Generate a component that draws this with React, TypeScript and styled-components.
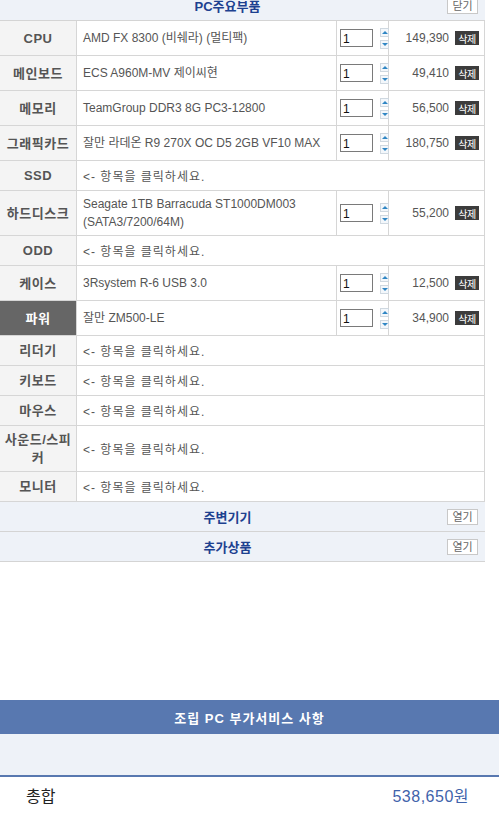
import * as React from "react";
import styled, { createGlobalStyle } from "styled-components";

type Part = {
  label: string;
  name?: string[];
  price?: string;
  active?: boolean;
};

const parts: Part[] = [
  { label: "CPU", name: ["AMD FX 8300 (비쉐라) (멀티팩)"], price: "149,390" },
  { label: "메인보드", name: ["ECS A960M-MV 제이씨현"], price: "49,410" },
  { label: "메모리", name: ["TeamGroup DDR3 8G PC3-12800"], price: "56,500" },
  { label: "그래픽카드", name: ["잘만 라데온 R9 270X OC D5 2GB VF10 MAX"], price: "180,750" },
  { label: "SSD" },
  {
    label: "하드디스크",
    name: ["Seagate 1TB Barracuda ST1000DM003", "(SATA3/7200/64M)"],
    price: "55,200",
  },
  { label: "ODD" },
  { label: "케이스", name: ["3Rsystem R-6 USB 3.0"], price: "12,500" },
  { label: "파워", name: ["잘만 ZM500-LE"], price: "34,900", active: true },
  { label: "리더기" },
  { label: "키보드" },
  { label: "마우스" },
  { label: "사운드/스피커" },
  { label: "모니터" },
];

const EMPTY_TEXT = "<- 항목을 클릭하세요.";

const Spinner = () => (
  <SpinBox>
    <SpinButton>
      <UpArrow />
    </SpinButton>
    <SpinButton>
      <DownArrow />
    </SpinButton>
  </SpinBox>
);

export default function App() {
  return (
    <>
      <GlobalStyle />
      <Page>
        <Section>
          <SectionHead>
            <SectionTitle>PC주요부품</SectionTitle>
            <SmallButton>닫기</SmallButton>
          </SectionHead>
          {parts.map((p) => (
            <Row key={p.label} $tall={!!p.name && !p.name[1]}>
              <Label $active={p.active}>
                {p.label === "사운드/스피커" ? (
                  <>
                    사운드/스피
                    <br />커
                  </>
                ) : (
                  p.label
                )}
              </Label>
              {p.name ? (
                <>
                  <NameCell>
                    {p.name.map((line) => (
                      <div key={line}>{line}</div>
                    ))}
                  </NameCell>
                  <QtyCell>
                    <QtyInput defaultValue="1" />
                    <Spinner />
                  </QtyCell>
                  <PriceCell>
                    <span>{p.price}</span>
                    <DeleteButton>삭제</DeleteButton>
                  </PriceCell>
                </>
              ) : (
                <EmptyCell>{EMPTY_TEXT}</EmptyCell>
              )}
            </Row>
          ))}
          <FoldBar>
            <SectionTitle>주변기기</SectionTitle>
            <SmallButton>열기</SmallButton>
          </FoldBar>
          <FoldBar>
            <SectionTitle>추가상품</SectionTitle>
            <SmallButton>열기</SmallButton>
          </FoldBar>
        </Section>

        <Service>
          <ServiceHead>조립 PC 부가서비스 사항</ServiceHead>
          <ServiceBody />
        </Service>

        <TotalRow>
          <TotalLabel>총합</TotalLabel>
          <TotalPrice>538,650원</TotalPrice>
        </TotalRow>
      </Page>
    </>
  );
}

const GlobalStyle = createGlobalStyle`
  html, body {
    margin: 0;
    padding: 0;
    background: #fff;
    overflow: hidden;
  }
  body {
    font-family: "Liberation Sans", "Noto Sans CJK KR", sans-serif;
    font-size: 12px;
    color: #555;
  }
`;

const Page = styled.div`
  width: 502px;
  margin-top: -9px;
`;

const Section = styled.div`
  width: 485px;
`;

const SectionHead = styled.div`
  display: flex;
  align-items: center;
  height: 29px;
  background: #eef2f8;
  border-bottom: 1px solid #d4d4d4;
  padding-left: 8px;
`;

const FoldBar = styled(SectionHead)`
  height: 29px;
  &:first-of-type {
    border-top: 1px solid #d4d4d4;
  }
`;

const SectionTitle = styled.div`
  flex: 1;
  text-align: center;
  font-size: 13px;
  font-weight: bold;
  color: #1d4190;
`;

const SmallButton = styled.button`
  width: 31px;
  height: 16px;
  margin-right: 7px;
  padding: 0;
  border: 1px solid #c8c8c8;
  background: #fff;
  font-family: "Noto Sans CJK KR", sans-serif;
  font-size: 11px;
  line-height: 13px;
  color: #666;
`;

const Row = styled.div<{ $tall?: boolean }>`
  display: grid;
  grid-template-columns: 77px 260px 52px 1fr;
  min-height: ${(p) => (p.$tall ? 34 : 29)}px;
  border-bottom: 1px solid #d6d6d6;
  border-right: 1px solid #d6d6d6;
`;

const Label = styled.div<{ $active?: boolean }>`
  display: flex;
  align-items: center;
  justify-content: center;
  text-align: center;
  padding: 5px 0 4px;
  line-height: 18px;
  font-weight: bold;
  font-size: 13px;
  letter-spacing: 0.5px;
  background: ${(p) => (p.$active ? "#666" : "#f4f4f4")};
  color: ${(p) => (p.$active ? "#fff" : "#555")};
  border-right: 1px solid #d6d6d6;
`;

const NameCell = styled.div`
  display: flex;
  flex-direction: column;
  justify-content: center;
  padding: 4px 6px;
  line-height: 18px;
  border-right: 1px solid #d6d6d6;
`;

const EmptyCell = styled.div`
  grid-column: 2 / span 3;
  display: flex;
  align-items: center;
  padding-left: 6px;
  letter-spacing: 1px;
`;

const QtyCell = styled.div`
  display: flex;
  align-items: center;
  padding-left: 3px;
  gap: 7px;
  border-right: 1px solid #d6d6d6;
`;

const QtyInput = styled.input`
  width: 33px;
  height: 18px;
  box-sizing: border-box;
  margin: 0;
  padding: 2px 2px 0;
  border: 1px solid #7a7a7a;
  font-family: "Liberation Sans", sans-serif;
  font-size: 12px;
  color: #111;
`;

const SpinBox = styled.div`
  display: flex;
  flex-direction: column;
  gap: 3px;
`;

const SpinButton = styled.span`
  display: flex;
  align-items: center;
  justify-content: center;
  width: 7px;
  height: 7px;
  border: 1px solid #cfd8e0;
  background: #f3f7fb;
`;

const UpArrow = styled.span`
  width: 0;
  height: 0;
  border-left: 3px solid transparent;
  border-right: 3px solid transparent;
  border-bottom: 3px solid #2f86c4;
`;

const DownArrow = styled(UpArrow)`
  border-bottom: 0;
  border-top: 3px solid #2f86c4;
`;

const PriceCell = styled.div`
  display: flex;
  align-items: center;
  justify-content: flex-end;
  gap: 6px;
  padding-right: 5px;
  color: #555;
`;

const DeleteButton = styled.span`
  display: inline-flex;
  align-items: center;
  justify-content: center;
  width: 24px;
  height: 14px;
  background: #3c3c3c;
  color: #fff;
  font-family: "Noto Sans CJK KR", sans-serif;
  font-size: 10px;
  letter-spacing: -0.5px;
`;

const Service = styled.div`
  width: 499px;
  margin-top: 138px;
`;

const ServiceHead = styled.div`
  display: flex;
  align-items: center;
  justify-content: center;
  height: 34px;
  background: #5878b0;
  color: #fff;
  font-weight: bold;
  font-size: 13px;
  letter-spacing: 1px;
`;

const ServiceBody = styled.div`
  height: 41px;
  background: #eef2f8;
  border-bottom: 2px solid #5878b0;
`;

const TotalRow = styled.div`
  display: flex;
  align-items: center;
  justify-content: space-between;
  height: 36px;
  padding: 0 30px 0 26px;
  width: 499px;
  box-sizing: border-box;
  font-size: 16px;
`;

const TotalLabel = styled.div`
  color: #222;
`;

const TotalPrice = styled.div`
  color: #3f63ab;
  letter-spacing: 0.5px;
`;
